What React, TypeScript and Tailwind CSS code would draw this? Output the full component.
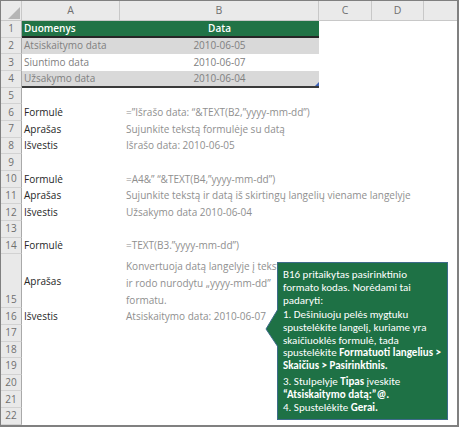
import React from "react";

const headCell =
  "shrink-0 flex items-center justify-center border-r border-b border-[#c8c8c8] text-[#6f6f6f] text-[10.5px]";

function Row({
  n,
  h = "h-[16.67px]",
  numPos = "items-center",
  children,
}: {
  n: number;
  h?: string;
  numPos?: string;
  children?: React.ReactNode;
}) {
  return (
    <div className={`flex ${h}`}>
      <div
        className={`w-[21px] shrink-0 flex ${numPos} justify-center bg-[#e9e9e9] border-r border-r-[#a9a9a9] border-b border-b-[#d2d2d2] text-[#6f6f6f] text-[10px] leading-[15px]`}
      >
        {n}
      </div>
      {children}
    </div>
  );
}

function Pair({ label, value }: { label: string; value: string }) {
  return (
    <>
      <div className="w-[98px] shrink-0 pl-[2px] flex items-center text-[#262626]">{label}</div>
      <div className="w-[199px] shrink-0 pl-[6px] flex items-center whitespace-nowrap text-[#8f8f8f]">
        {value}
      </div>
    </>
  );
}

function Callout() {
  return (
    <div className="absolute left-[276px] top-[261px] w-[171px] h-[158px] bg-[#1e7145] border border-[#3d6b8a] text-white font-['Carlito','Lato',sans-serif] text-[11px] leading-[12.9px] pl-[5px] pt-[6px] whitespace-nowrap">
      <svg
        className="absolute left-[-13px] top-[46px]"
        width="13"
        height="38"
        viewBox="0 0 13 38"
      >
        <polygon points="13,0 1,20 13,38" fill="#1e7145" />
        <polyline points="13,0 1,20 13,38" fill="none" stroke="#3d6b8a" strokeWidth="1" />
      </svg>
      <p>
        B16 pritaikytas pasirinktinio
        <br />
        formato kodas. Norėdami tai
        <br />
        padaryti:
      </p>
      <p className="mt-[1px]">
        1. Dešiniuoju pelės mygtuku
        <br />
        spustelėkite langelį, kuriame yra
        <br />
        skaičiuoklės formulė, tada
        <br />
        spustelėkite <b>Formatuoti langelius &gt;</b>
        <br />
        <b>Skaičius &gt; Pasirinktinis.</b>
      </p>
      <p className="mt-[3px]">
        3. Stulpelyje <b>Tipas</b> įveskite
        <br />
        <b>“Atsiskaitymo datą:”@.</b>
      </p>
      <p>
        4. Spustelėkite <b>Gerai.</b>
      </p>
    </div>
  );
}

export default function App() {
  return (
    <div className="relative w-[459px] h-[427px] overflow-hidden bg-white border-t border-l border-r-2 border-b-2 border-[#808080] font-['Open_Sans',sans-serif] text-[10px]">
      {/* column headers */}
      <div className="flex h-[20px] bg-[#eaeaea]">
        <div className="w-[21px] shrink-0 relative border-r border-b border-[#c8c8c8]">
          <svg className="absolute right-[1px] bottom-[1px]" width="12" height="12" viewBox="0 0 12 12">
            <polygon points="12,0 12,12 0,12" fill="#b5b5b5" />
          </svg>
        </div>
        <div className={`w-[98px] ${headCell}`}>A</div>
        <div className={`w-[199px] ${headCell}`}>B</div>
        <div className={`w-[53px] ${headCell}`}>C</div>
        <div className={`w-[52px] ${headCell}`}>D</div>
        <div className="flex-1 border-b border-[#c8c8c8]" />
      </div>

      {/* table rows 1-4 */}
      <Row n={1}>
        <div className="w-[297px] shrink-0 flex items-center bg-[#217346] border-b-2 border-[#262626] text-white font-semibold">
          <div className="w-[98px] pl-[2px]">Duomenys</div>
          <div className="w-[199px] text-center">Data</div>
        </div>
      </Row>
      <Row n={2}>
        <div className="w-[297px] shrink-0 flex items-center bg-[#d9d9d9] text-[#808080]">
          <div className="w-[98px] pl-[2px]">Atsiskaitymo data</div>
          <div className="w-[199px] text-center">2010-06-05</div>
        </div>
      </Row>
      <Row n={3}>
        <div className="w-[297px] shrink-0 flex items-center text-[#808080]">
          <div className="w-[98px] pl-[2px]">Siuntimo data</div>
          <div className="w-[199px] text-center">2010-06-07</div>
        </div>
      </Row>
      <Row n={4}>
        <div className="w-[297px] shrink-0 relative flex items-center bg-[#d9d9d9] border-b-2 border-[#3a3a3a] text-[#808080]">
          <div className="w-[98px] pl-[2px]">Užsakymo data</div>
          <div className="w-[199px] text-center">2010-06-04</div>
          <svg className="absolute right-0 bottom-0" width="4" height="4" viewBox="0 0 4 4">
            <polygon points="4,0 4,4 0,4" fill="#3c62b8" />
          </svg>
        </div>
      </Row>
      <Row n={5} />

      <Row n={6}>
        <Pair label="Formulė" value="=”Išrašo data: “&TEXT(B2,”yyyy-mm-dd”)" />
      </Row>
      <Row n={7}>
        <Pair label="Aprašas" value="Sujunkite tekstą formulėje su datą" />
      </Row>
      <Row n={8}>
        <Pair label="Išvestis" value="Išrašo data: 2010-06-05" />
      </Row>
      <Row n={9} />
      <Row n={10}>
        <Pair label="Formulė" value="=A4&” “&TEXT(B4,”yyyy-mm-dd”)" />
      </Row>
      <Row n={11}>
        <Pair label="Aprašas" value="Sujunkite tekstą ir datą iš skirtingų langelių viename langelyje" />
      </Row>
      <Row n={12}>
        <Pair label="Išvestis" value="Užsakymo data 2010-06-04" />
      </Row>
      <Row n={13} />
      <Row n={14}>
        <Pair label="Formulė" value="=TEXT(B3.”yyyy-mm-dd”)" />
      </Row>
      <Row n={15} h="h-[54px]" numPos="items-end">
        <div className="w-[98px] shrink-0 pl-[2px] flex items-center text-[#262626]">Aprašas</div>
        <div className="w-[199px] shrink-0 pl-[6px] flex flex-col justify-end whitespace-nowrap text-[#8f8f8f] leading-[16.67px]">
          <span>Konvertuoja datą langelyje į tekstą</span>
          <span>ir rodo nurodytu „yyyy-mm-dd”</span>
          <span>formatu.</span>
        </div>
      </Row>
      <Row n={16}>
        <Pair label="Išvestis" value="Atsiskaitymo data: 2010-06-07" />
      </Row>
      <Row n={17} />
      <Row n={18} />
      <Row n={19} />
      <Row n={20} />
      <Row n={21} />
      <Row n={22} />

      <Callout />
    </div>
  );
}
